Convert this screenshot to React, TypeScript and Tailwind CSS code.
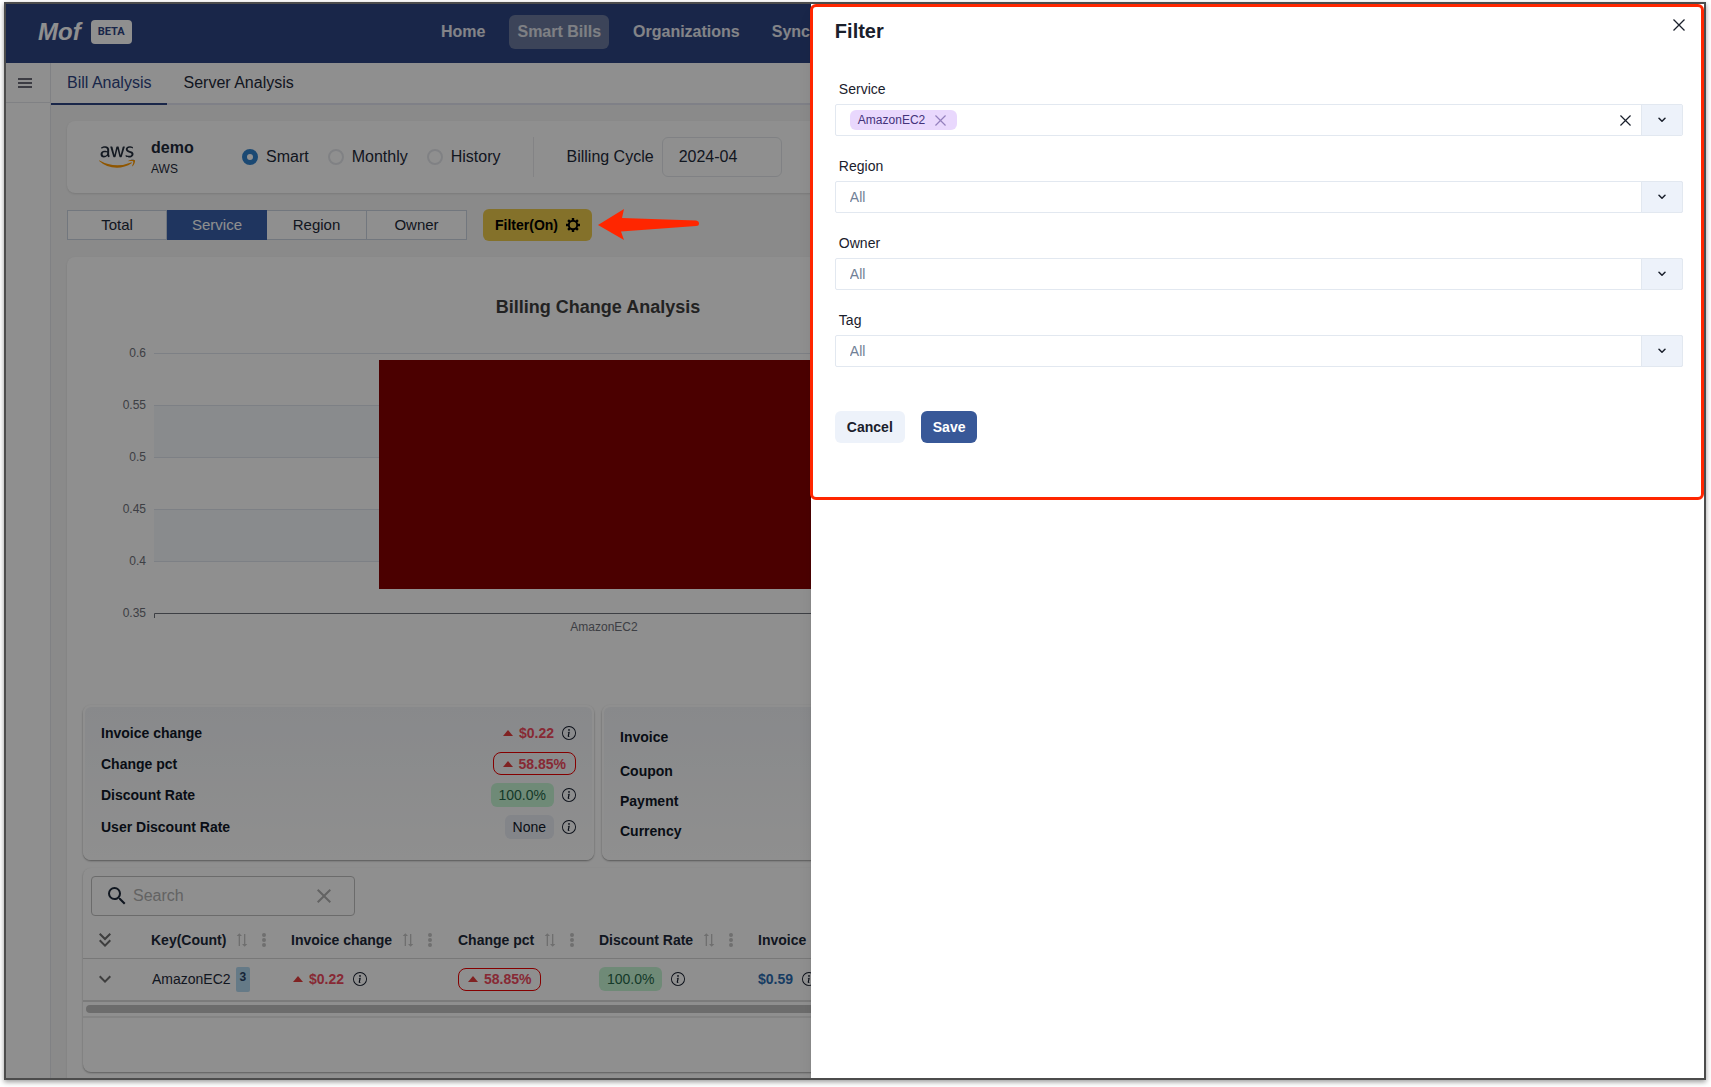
import React from "react";
import { FaAws } from "react-icons/fa";
import { BsInfoCircle } from "react-icons/bs";
import {
  MdClose,
  MdExpandMore,
  MdKeyboardDoubleArrowDown,
  MdSearch,
  MdSyncAlt,
} from "react-icons/md";

function Info() {
  return (
    <button type="button" aria-label="More information" className="shrink-0 text-gray-900">
      <BsInfoCircle size={14} className="block" />
    </button>
  );
}

function Triangle() {
  return (
    <svg width="10" height="6" viewBox="0 0 10 6" className="shrink-0" aria-hidden="true">
      <path d="M5 0L10 6H0Z" fill="#e53e3e" />
    </svg>
  );
}

function Increase() {
  return (
    <span className="flex items-center gap-1.5 font-bold text-[#f04a5e]">
      <Triangle />
      $0.22
    </span>
  );
}

function PctPill() {
  return (
    <span className="inline-flex h-[23px] items-center gap-1.5 rounded-lg border border-[#ee0000] px-[9px] font-bold text-[#f04a5e]">
      <Triangle />
      58.85%
    </span>
  );
}

function GreenBadge() {
  return (
    <span className="rounded-md bg-[#c6f6d5] px-2 leading-6 text-[#276749]">100.0%</span>
  );
}

function Cross({ size }: { size: number }) {
  return (
    <svg width={size} height={size} viewBox="0 0 12 12" aria-hidden="true">
      <path d="M.5 .5L11.5 11.5M11.5 .5L.5 11.5" stroke="currentColor" strokeWidth="1.3" fill="none" />
    </svg>
  );
}

function Chevron() {
  return (
    <svg width="8" height="6" viewBox="0 0 8 6" aria-hidden="true">
      <path d="M1 1.2L4 4.2L7 1.2" stroke="currentColor" strokeWidth="1.5" fill="none" strokeLinecap="round" strokeLinejoin="round" />
    </svg>
  );
}

function Header() {
  const link = "rounded-md px-2 leading-[34px] text-white/90";
  return (
    <header className="flex h-[59px] items-center bg-[#2e4482] pb-[3px]">
      <div className="flex w-[427px] shrink-0 items-center gap-2.5 pl-8">
        <span className="text-2xl leading-6 font-bold text-white italic">Mof</span>
        <span className="rounded bg-white px-[7px] font-['Roboto',sans-serif] text-[11px] leading-6 font-bold text-[#2e4482]">
          BETA
        </span>
      </div>
      <nav className="flex gap-4 font-bold">
        <a href="#home" className={link}>Home</a>
        <a href="#bills" className="rounded-md bg-[#6b7a9f] px-2 leading-[34px] text-white/80">Smart Bills</a>
        <a href="#organizations" className={link}>Organizations</a>
        <a href="#sync" className={link}>Sync</a>
      </nav>
    </header>
  );
}

function AccountCard() {
  return (
    <section className="flex h-[72px] items-center rounded-lg bg-white pl-8 shadow">
      <svg width="0" height="0" className="absolute" aria-hidden="true">
        <linearGradient id="aws-fill" gradientUnits="userSpaceOnUse" x1="0" y1="0" x2="0" y2="512">
          <stop offset="0.6" stopColor="#252f3e" />
          <stop offset="0.6" stopColor="#ff9900" />
        </linearGradient>
      </svg>
      <FaAws size={36} fill="url(#aws-fill)" aria-label="AWS logo" />
      <div className="ml-4 w-[91px]">
        <h1 className="leading-6 font-bold">demo</h1>
        <p className="text-xs leading-[18px]">AWS</p>
      </div>
      <fieldset className="flex items-center gap-[19px]">
        {["Smart", "Monthly", "History"].map((name, i) => (
          <label key={name} className="flex items-center gap-2">
            <input
              type="radio"
              name="mode"
              defaultChecked={i === 0}
              className="size-4 appearance-none rounded-full border-2 border-gray-200 checked:border-[5px] checked:border-[#3182ce]"
            />
            {name}
          </label>
        ))}
      </fieldset>
      <div className="ml-[33px] h-10 w-px bg-[#e9eaee]" />
      <label className="ml-8 flex items-center gap-2">
        Billing Cycle
        <input
          defaultValue="2024-04"
          className="h-10 w-[120px] rounded-md border border-gray-200 px-4"
        />
      </label>
    </section>
  );
}

function Toolbar() {
  const tab = "w-[100px] border border-l-0 border-[#cbd5e0] bg-white leading-7";
  return (
    <div className="my-4 flex h-8 items-center">
      <div className="flex text-[15px]">
        <button type="button" className="w-[100px] border border-[#cbd5e0] bg-white leading-7">Total</button>
        <button type="button" className="w-[100px] border border-[#385fa9] bg-[#385fa9] leading-7 text-white">Service</button>
        <button type="button" className={tab}>Region</button>
        <button type="button" className={tab}>Owner</button>
      </div>
      <button type="button" className="ml-4 flex h-8 items-center gap-2 rounded-md bg-[#ecc94b] px-3 text-sm font-bold text-black">
        Filter(On)
        <svg width="14" height="14" viewBox="0 0 14 14" aria-hidden="true">
          <circle cx="7" cy="7" r="4.2" fill="none" stroke="currentColor" strokeWidth="1.9" />
          <path
            d="M7 0V2.6M7 11.4V14M0 7H2.6M11.4 7H14M2.1 2.1L3.9 3.9M10.1 10.1L11.9 11.9M11.9 2.1L10.1 3.9M3.9 10.1L2.1 11.9"
            stroke="currentColor"
            strokeWidth="2.4"
          />
        </svg>
      </button>
    </div>
  );
}

function Chart() {
  const ticks = ["0.6", "0.55", "0.5", "0.45", "0.4", "0.35"];
  return (
    <svg width="1030" height="448" viewBox="0 0 1030 448" className="block font-['Liberation_Sans',sans-serif]" role="img">
      <text x="515" y="56" textAnchor="middle" fontSize="18" fontWeight="700" fill="#3d3d3d">
        Billing Change Analysis
      </text>
      <rect x="71" y="148" width="900" height="52" fill="#f5f8fc" />
      <rect x="71" y="252" width="900" height="52" fill="#f5f8fc" />
      {ticks.map((t, i) => (
        <g key={t}>
          {i < 5 && <rect x="71" y={96 + i * 52} width="900" height="1" fill="#dfe4ee" />}
          <text x="63" y={100 + i * 52} textAnchor="end" fontSize="12" fill="#6e7079">
            {t}
          </text>
        </g>
      ))}
      <path d="M71.5 361V356.5H971.5V361" stroke="#6e7079" fill="none" />
      <rect x="296" y="103" width="450" height="229" fill="#860000" />
      <text x="521" y="374" textAnchor="middle" fontSize="12" fill="#6e7079">
        AmazonEC2
      </text>
    </svg>
  );
}

function Summary() {
  const card =
    "h-[155px] flex-1 rounded-lg border-2 border-white bg-linear-to-b from-[#f3f5f8] to-white shadow-[0_1px_2px_rgba(0,0,0,.4)]";
  return (
    <div className="flex gap-2 text-sm leading-[22px] text-gray-900">
      <dl className={card + " flex flex-col gap-2 px-4 pt-[15px]"}>
        <div className="flex h-[22px] items-center justify-between">
          <dt className="font-bold">Invoice change</dt>
          <dd className="flex items-center gap-2"><Increase /><Info /></dd>
        </div>
        <div className="flex h-[23px] items-center justify-between">
          <dt className="font-bold">Change pct</dt>
          <dd className="flex"><PctPill /></dd>
        </div>
        <div className="flex h-6 items-center justify-between">
          <dt className="font-bold">Discount Rate</dt>
          <dd className="flex items-center gap-2"><GreenBadge /><Info /></dd>
        </div>
        <div className="flex h-6 items-center justify-between">
          <dt className="font-bold">User Discount Rate</dt>
          <dd className="flex items-center gap-2">
            <span className="rounded-md bg-[#e9edf5] px-2 leading-6">None</span>
            <Info />
          </dd>
        </div>
      </dl>
      <dl className={card + " flex flex-col gap-2 px-4 pt-[19px] font-bold"}>
        <dt className="pb-1">Invoice</dt>
        <dt>Coupon</dt>
        <dt>Payment</dt>
        <dt>Currency</dt>
      </dl>
    </div>
  );
}

function ColumnHead({ name }: { name: string }) {
  return (
    <th scope="col" className="p-0 pl-4 text-left">
      <div className="flex items-center whitespace-nowrap">
        {name}
        <button type="button" aria-label={"Sort by " + name} className="ml-2 text-[#c6c6c6]">
          <MdSyncAlt size={16} className="block -rotate-90" />
        </button>
        <button type="button" aria-label={name + " column menu"} className="ml-3 text-[#c6c6c6]">
          <svg width="4" height="14" viewBox="0 0 4 14" className="block">
            <path d="M2 2H2M2 7H2M2 12H2" stroke="currentColor" strokeWidth="4" strokeLinecap="round" />
          </svg>
        </button>
      </div>
    </th>
  );
}

function DataCard() {
  return (
    <section className="mt-2 h-[204px] rounded-lg bg-white pt-2 shadow-[0_1px_2px_rgba(0,0,0,.35)]">
      <label className="mx-2 mb-1.5 flex h-10 w-[264px] items-center gap-1 rounded border border-[#bfbfbf] px-[13px]">
        <MdSearch size={24} className="shrink-0" aria-label="Search" />
        <input placeholder="Search" className="w-full min-w-0 flex-1 outline-none placeholder:text-[#b0b0b0]" />
        <button type="button" aria-label="Clear search" className="mr-[5px] shrink-0 text-[#b0b0b0]">
          <MdClose size={24} className="block" />
        </button>
      </label>
      <div className="overflow-hidden">
        <table className="w-full table-fixed text-sm">
          <colgroup>
            <col className="w-[52px]" />
            <col className="w-[140px]" />
            <col className="w-[167px]" />
            <col className="w-[141px]" />
            <col className="w-[159px]" />
            <col />
          </colgroup>
          <thead>
            <tr className="h-9 border-b border-[#d6d6d6]">
              <th scope="col" className="p-0 pl-2.5 text-left text-[#6f6f6f]">
                <button type="button" aria-label="Expand all" className="block">
                  <MdKeyboardDoubleArrowDown size={24} className="block" />
                </button>
              </th>
              {["Key(Count)", "Invoice change", "Change pct", "Discount Rate", "Invoice"].map((n) => (
                <ColumnHead key={n} name={n} />
              ))}
            </tr>
          </thead>
          <tbody>
            <tr className="h-[43px] border-b-2 border-[#dcdcdc]">
              <td className="p-0 pl-2.5 text-[#6f6f6f]">
                <button type="button" aria-label="Expand row" className="block">
                  <MdExpandMore size={24} className="block" />
                </button>
              </td>
              <td className="p-0 pl-[17px]">
                <div className="flex items-center gap-[5px]">
                  AmazonEC2
                  <span className="h-[25px] rounded-xs bg-[#b5daf0] px-1 text-xs leading-5 font-bold text-[#2a4365]">3</span>
                </div>
              </td>
              <td className="p-0 pl-[18px]">
                <div className="flex items-center gap-[9px]"><Increase /><Info /></div>
              </td>
              <td className="p-0 pl-4">
                <div className="flex"><PctPill /></div>
              </td>
              <td className="p-0 pl-4">
                <div className="flex items-center gap-[9px]"><GreenBadge /><Info /></div>
              </td>
              <td className="p-0 pl-4">
                <div className="flex items-center gap-[9px] font-bold text-[#2b6cb0]">$0.59<Info /></div>
              </td>
            </tr>
          </tbody>
        </table>
      </div>
      <div className="border-b-2 border-[#ececec] py-[3px] pl-[3px]">
        <div className="h-2 rounded-full bg-[#c1c1c1]" />
      </div>
    </section>
  );
}

function Field({ label }: { label: string }) {
  return (
    <div className="mt-5">
      <label htmlFor={label} className="block px-1 pb-1 leading-[21px]">{label}</label>
      <div className="relative">
        <select
          id={label}
          className="block h-8 w-full appearance-none rounded-xs border border-[#e2e8f0] bg-white pl-3.5 text-[#718096]"
        >
          <option>All</option>
        </select>
        <span className="pointer-events-none absolute inset-y-0 right-0 flex w-[42px] items-center justify-center rounded-r-xs border border-[#e2e8f0] bg-[#edf2fa]">
          <Chevron />
        </span>
      </div>
    </div>
  );
}

function Drawer() {
  return (
    <aside
      role="dialog"
      aria-label="Filter"
      className="absolute inset-y-0 right-0 w-[52.6%] bg-white text-sm text-[#1a202c] shadow-[0_10px_15px_-3px_rgba(0,0,0,.1),0_4px_6px_-2px_rgba(0,0,0,.05)]"
    >
      <form className="relative pt-3 pr-[21px] pb-[57px] pl-6" onSubmit={(e) => e.preventDefault()}>
        <div className="flex justify-between">
          <h2 className="text-xl leading-[30px] font-bold">Filter</h2>
          <button type="button" aria-label="Close" className="-mr-[5px] flex size-[18px] items-center justify-center">
            <Cross size={12} />
          </button>
        </div>
        <div className="mt-[33px]">
          <label htmlFor="service" className="block px-1 pb-1 leading-[21px]">Service</label>
          <div className="flex h-8 items-stretch rounded-xs border border-[#e2e8f0]">
            <div className="flex flex-1 items-center gap-2 pr-2.5 pl-3.5">
              <span className="flex h-5 items-center rounded-md bg-[#e9d8fd] pr-[11px] pl-2 text-xs text-[#44337a]">
                AmazonEC2
                <button type="button" aria-label="Remove AmazonEC2" className="ml-2.5 text-[#9480bd]">
                  <Cross size={11} />
                </button>
              </span>
              <input id="service" className="min-w-0 flex-1 outline-none" />
              <button type="button" aria-label="Clear services"><Cross size={11} /></button>
            </div>
            <button type="button" aria-label="Show services" className="flex w-[41px] items-center justify-center border-l border-[#e2e8f0] bg-[#edf2fa]">
              <Chevron />
            </button>
          </div>
        </div>
        <Field label="Region" />
        <Field label="Owner" />
        <Field label="Tag" />
        <div className="mt-11 flex gap-4 font-bold">
          <button type="button" className="h-8 rounded-md bg-[#edf2fa] px-3">Cancel</button>
          <button type="submit" className="h-8 rounded-md bg-[#385898] px-3 text-white">Save</button>
        </div>
        <div className="pointer-events-none absolute inset-y-0 right-0 -left-px rounded-md border-3 border-[#ff2600]" />
      </form>
    </aside>
  );
}

export default function App() {
  return (
    <div className="flex h-screen bg-white pt-0.5 pr-[5px] pb-[7px] pl-1 font-['Liberation_Sans',Arial,sans-serif] text-base text-gray-800">
      <div className="relative flex min-w-0 flex-1 flex-col overflow-hidden border-2 border-[#4c4c4c] shadow-[0_2px_5px_rgba(0,0,0,.4)]">
        <Header />
        <div className="flex min-h-0 flex-1">
          <aside className="w-[45px] shrink-0 border-r border-gray-200 bg-white">
            <button type="button" aria-label="Menu" className="flex h-10 w-full items-center border-b border-gray-200 pl-3 text-[#6b6b78]">
              <svg width="14" height="10" viewBox="0 0 14 10">
                <path d="M0 1H14M0 5H14M0 9H14" stroke="currentColor" strokeWidth="2" />
              </svg>
            </button>
          </aside>
          <main className="min-w-0 flex-1 overflow-hidden bg-[#f7f7f7]">
            <nav className="flex h-[42px] border-b-2 border-[#e2e4f0] bg-white">
              <a href="#bill" className="h-[42px] border-b-2 border-[#2e4482] px-4 leading-10 text-[#2e4482]">Bill Analysis</a>
              <a href="#server" className="px-4 leading-10">Server Analysis</a>
            </nav>
            <div className="p-4">
              <AccountCard />
              <Toolbar />
              <section className="h-[840px] overflow-hidden rounded-lg bg-white px-4 shadow">
                <div className="w-[1030px]">
                  <Chart />
                  <Summary />
                  <DataCard />
                </div>
              </section>
            </div>
          </main>
        </div>
        <div className="absolute inset-0 bg-black/44" />
        <svg
          width="102"
          height="32"
          viewBox="0 0 102 32"
          className="pointer-events-none absolute top-[205px] left-[592px]"
          aria-hidden="true"
        >
          <path d="M0 16L26 0L24 9L98 11.500Q101 12 101 14.500Q101 17 98 17L23 22.500L26 31Z" fill="#ff2600" />
        </svg>
        <Drawer />
      </div>
    </div>
  );
}
